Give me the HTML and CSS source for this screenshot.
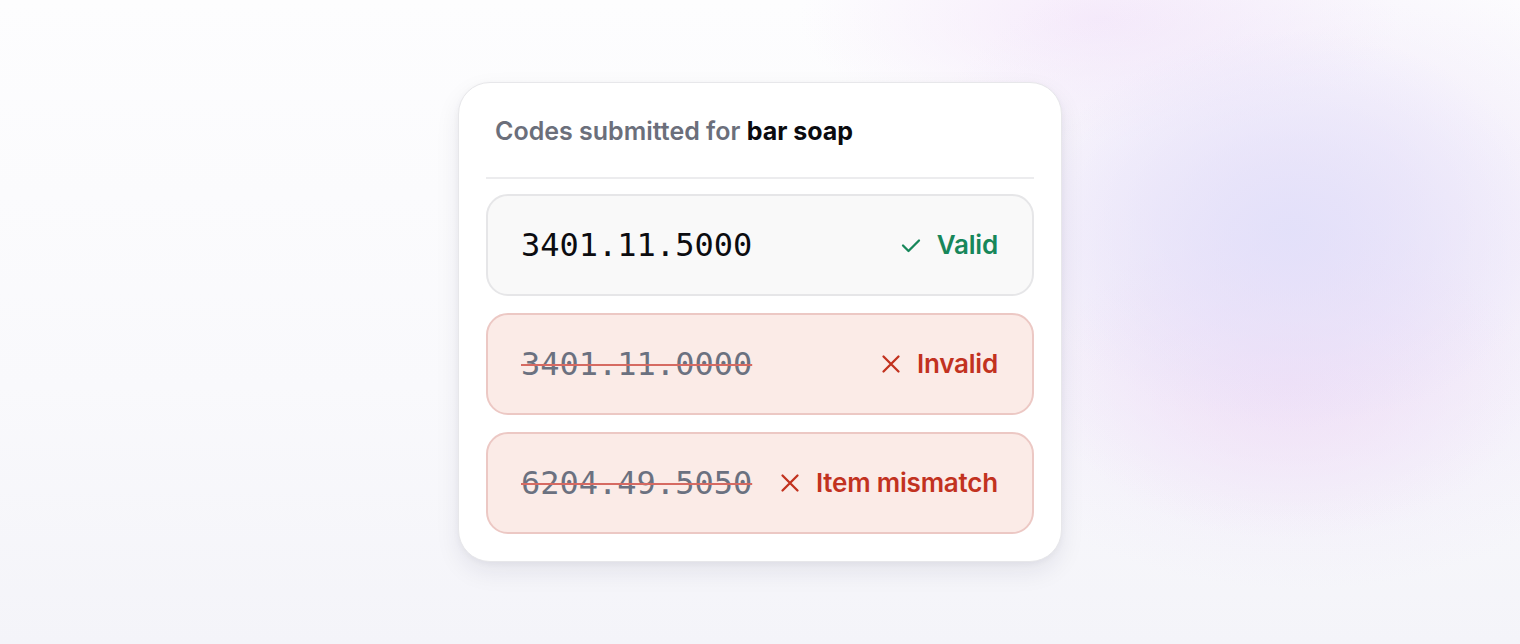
FILE: index.html
```html
<!DOCTYPE html>
<html lang="en">
<head>
<meta charset="utf-8">
<title>Codes submitted</title>
<link rel="stylesheet" href="styles.css">
</head>
<body>
<div class="bg">
  <div class="card">
    <div class="header">Codes submitted for <strong>bar soap</strong></div>
    <div class="rows">
      <div class="row valid">
        <span class="code">3401.11.5000</span>
        <span class="status">
          <svg class="icon" viewBox="0 0 22 22" width="22" height="22" aria-hidden="true"><path d="M3 11.5 L8.5 17 L19 6.5" fill="none" stroke="currentColor" stroke-width="2.3" stroke-linecap="round" stroke-linejoin="round"/></svg>
          Valid
        </span>
      </div>
      <div class="row invalid">
        <span class="code">3401.11.0000</span>
        <span class="status">
          <svg class="icon" viewBox="0 0 22 22" width="22" height="22" aria-hidden="true"><path d="M3.5 3.5 L18.5 18.5 M18.5 3.5 L3.5 18.5" fill="none" stroke="currentColor" stroke-width="2.3" stroke-linecap="round"/></svg>
          Invalid
        </span>
      </div>
      <div class="row invalid">
        <span class="code">6204.49.5050</span>
        <span class="status">
          <svg class="icon" viewBox="0 0 22 22" width="22" height="22" aria-hidden="true"><path d="M3.5 3.5 L18.5 18.5 M18.5 3.5 L3.5 18.5" fill="none" stroke="currentColor" stroke-width="2.3" stroke-linecap="round"/></svg>
          Item mismatch
        </span>
      </div>
    </div>
  </div>
</div>
</body>
</html>
```

FILE: styles.css
```css
* { box-sizing: border-box; }
html, body { margin: 0; padding: 0; }
body {
  font-family: Inter, "Noto Sans", "Liberation Sans", sans-serif;
  width: 1520px;
  height: 644px;
  overflow: hidden;
}
.bg {
  width: 1520px;
  height: 644px;
  display: flex;
  align-items: center;
  justify-content: center;
  background:
    radial-gradient(ellipse 260px 200px at 1290px 230px, rgba(226,224,250,0.9), rgba(226,224,250,0) 100%),
    radial-gradient(ellipse 240px 160px at 1290px 380px, rgba(240,222,246,0.8), rgba(240,222,246,0) 100%),
    radial-gradient(ellipse 420px 330px at 1300px 260px, rgba(236,226,248,1), rgba(236,226,248,0) 100%),
    radial-gradient(ellipse 300px 120px at 1100px 20px, rgba(244,230,250,0.8), rgba(244,230,250,0) 100%),
    linear-gradient(180deg, #fdfdfe 0%, #f9f9fc 60%, #f4f4f9 100%);
}
.card {
  width: 604px;
  height: 480px;
  background: #ffffff;
  border: 1px solid #e7e7ea;
  border-radius: 32px;
  box-shadow: 0 10px 24px rgba(30, 30, 60, 0.08), 0 2px 6px rgba(30, 30, 60, 0.04);
  padding: 27px 27px 27px;
  display: flex;
  flex-direction: column;
}
.header {
  font-size: 25px;
  line-height: 30px;
  font-weight: 600;
  color: #6b6f7b;
  padding: 6px 9px 31px;
  border-bottom: 2px solid #ececee;
  letter-spacing: 0;
}
.header strong {
  color: #0b0b0f;
  font-weight: 700;
}
.rows {
  margin-top: 15px;
  display: flex;
  flex-direction: column;
  gap: 17px;
}
.row {
  height: 102px;
  border-radius: 22px;
  border: 2px solid #e6e6e8;
  background: #f9f9f9;
  display: flex;
  align-items: center;
  justify-content: space-between;
  padding: 0 34px 0 33px;
}
.row.invalid {
  background: #fbebe7;
  border-color: #ecc8c4;
}
.code {
  font-family: "DejaVu Sans Mono", "Liberation Mono", monospace;
  font-size: 32px;
  color: #0c0c10;
  letter-spacing: 0;
}
.invalid .code {
  color: #6b7180;
  text-decoration: line-through;
  text-decoration-color: #d66a62;
  text-decoration-thickness: 2px;
}
.status {
  display: flex;
  align-items: center;
  gap: 15px;
  font-size: 26px;
  font-weight: 600;
  line-height: 30px;
  letter-spacing: -0.2px;
}
.valid .status { color: #17875a; }
.invalid .status { color: #c2321f; }
.icon { display: block; flex: none; }
```
